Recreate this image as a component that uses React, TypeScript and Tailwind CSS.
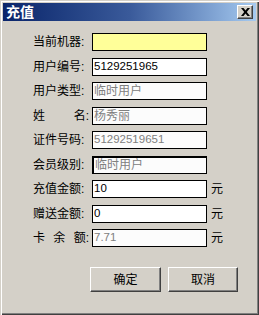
const font = { fontFamily: '"Liberation Sans", "Noto Sans CJK SC", sans-serif' };

type Row = {
  label: string[];
  value: string;
  kind: "yellow" | "edit" | "disabled" | "focus";
  yuan?: boolean;
};

const rows: Row[] = [
  { label: ["当前机器:"], value: "", kind: "yellow" },
  { label: ["用户编号:"], value: "5129251965", kind: "edit" },
  { label: ["用户类型:"], value: "临时用户", kind: "disabled" },
  { label: ["姓", "名:"], value: "杨秀丽", kind: "disabled" },
  { label: ["证件号码:"], value: "51292519651", kind: "disabled" },
  { label: ["会员级别:"], value: "临时用户", kind: "focus" },
  { label: ["充值金额:"], value: "10", kind: "edit", yuan: true },
  { label: ["赠送金额:"], value: "0", kind: "edit", yuan: true },
  { label: ["卡", "余", "额:"], value: "7.71", kind: "disabled", yuan: true },
];

function Field({ row }: { row: Row }) {
  const digits = /^[0-9.]+$/.test(row.value);
  let box = "bg-white border border-black";
  if (row.kind === "yellow") box = "bg-[#ffff99] border border-black";
  if (row.kind === "disabled") box = "bg-[#fcfcfc] border border-black text-[#808080]";
  if (row.kind === "focus") box = "bg-[#fcfcfc] border border-black border-t-2 border-l-2 text-[#808080]";
  return (
    <div className={`h-[18px] w-[115px] flex items-center pl-[1px] overflow-hidden ${box}`}>
      <span className={digits ? "text-[11.5px] leading-none" : "text-[12px] leading-none"}>{row.value}</span>
    </div>
  );
}

function Button({ children }: { children: string }) {
  return (
    <div className="h-[25px] border-t border-l border-white border-r border-b border-r-[#404040] border-b-[#404040] shadow-[inset_-1px_-1px_0_#808080] flex items-center justify-center text-[12px] text-black">
      {children}
    </div>
  );
}

export default function App() {
  return (
    <div
      className="w-[259px] h-[315px] bg-[#d4d0c8] flex flex-col p-[3px] shadow-[inset_1px_1px_0_#d4d0c8,inset_2px_2px_0_#ffffff,inset_-1px_-1px_0_#404040,inset_-2px_-2px_0_#808080]"
      style={font}
    >
      {/* 标题栏 */}
      <div className="h-[18px] flex items-center justify-between pl-[3px] pr-[3px] bg-gradient-to-r from-[#0a246a] via-[#3a5a9a] to-[#a6caf0]">
        <span className="text-white text-[14px] font-bold leading-none">充值</span>
        <div className="w-[16px] h-[14px] bg-[#d4d0c8] border-t border-l border-white border-r border-b border-r-[#404040] border-b-[#404040] shadow-[inset_-1px_-1px_0_#808080] flex items-center justify-center">
          <svg width="9" height="8" viewBox="0 0 9 8">
            <path d="M0 0h2.5L4.5 2.5 6.5 0H9L5.8 4 9 8H6.5L4.5 5.5 2.5 8H0l3.2-4z" fill="#000" />
          </svg>
        </div>
      </div>

      {/* 表单 */}
      <div className="flex flex-col gap-[6.5px] pt-[12px] pl-[30px]">
        {rows.map((row, i) => (
          <div key={i} className="flex items-center h-[18px]">
            <div className="w-[56px] flex justify-between text-[12px] text-black leading-none">
              {row.label.map((t, j) => (
                <span key={j}>{t}</span>
              ))}
            </div>
            <div className="ml-[3px]">
              <Field row={row} />
            </div>
            {row.yuan && <span className="ml-[4px] text-[12px] text-black leading-none">元</span>}
          </div>
        ))}
      </div>

      {/* 按钮 */}
      <div className="flex gap-[7px] pl-[87px] mt-[20px]">
        <div className="w-[71px]">
          <Button>确定</Button>
        </div>
        <div className="w-[70px]">
          <Button>取消</Button>
        </div>
      </div>
    </div>
  );
}
